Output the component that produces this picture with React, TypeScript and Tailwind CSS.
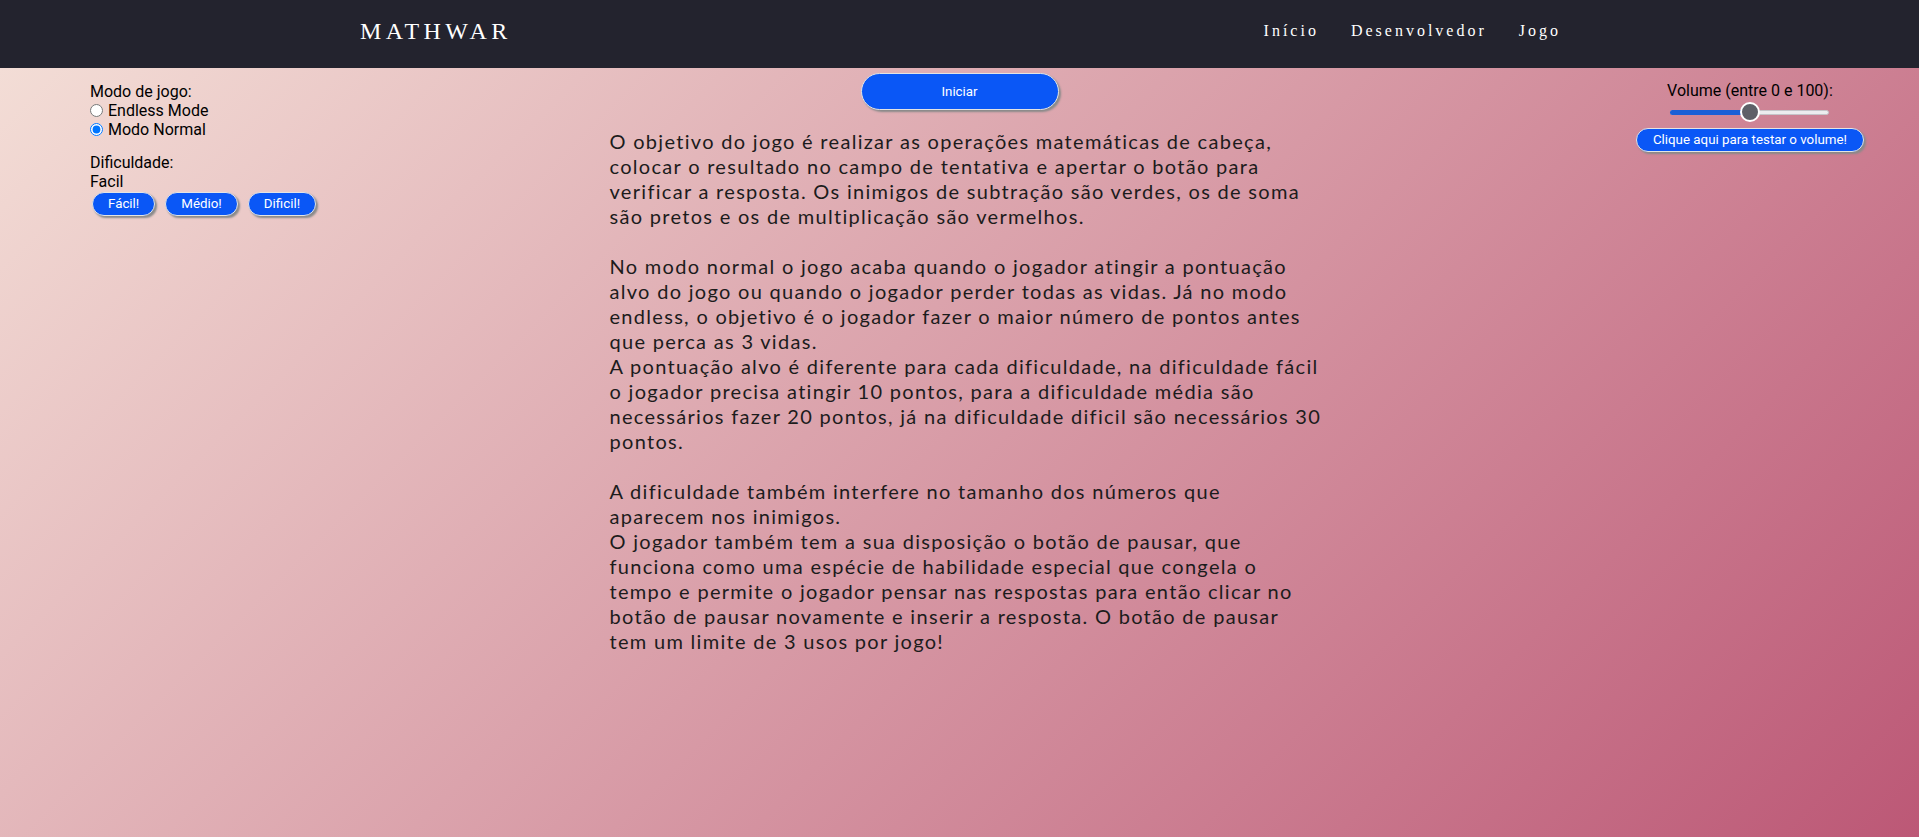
import React from "react";

const lines1 = [
  "O objetivo do jogo é realizar as operações matemáticas de cabeça,",
  "colocar o resultado no campo de tentativa e apertar o botão para",
  "verificar a resposta. Os inimigos de subtração são verdes, os de soma",
  "são pretos e os de multiplicação são vermelhos.",
];
const lines2 = [
  "No modo normal o jogo acaba quando o jogador atingir a pontuação",
  "alvo do jogo ou quando o jogador perder todas as vidas. Já no modo",
  "endless, o objetivo é o jogador fazer o maior número de pontos antes",
  "que perca as 3 vidas.",
  "A pontuação alvo é diferente para cada dificuldade, na dificuldade fácil",
  "o jogador precisa atingir 10 pontos, para a dificuldade média são",
  "necessários fazer 20 pontos, já na dificuldade dificil são necessários 30",
  "pontos.",
];
const lines3 = [
  "A dificuldade também interfere no tamanho dos números que",
  "aparecem nos inimigos.",
  "O jogador também tem a sua disposição o botão de pausar, que",
  "funciona como uma espécie de habilidade especial que congela o",
  "tempo e permite o jogador pensar nas respostas para então clicar no",
  "botão de pausar novamente e inserir a resposta. O botão de pausar",
  "tem um limite de 3 usos por jogo!",
];

function Block({ lines }: { lines: string[] }) {
  return (
    <div>
      {lines.map((l, i) => (
        <div key={i} className="whitespace-nowrap">
          {l}
        </div>
      ))}
    </div>
  );
}

const btn =
  "rounded-full bg-[#0a57f6] text-white text-[13.33px] leading-[16px] border border-[#e4e4e4] shadow-[2px_2px_2px_#8a8a8a] font-['Roboto',sans-serif]";

export default function App() {
  return (
    <div className="w-full min-h-screen flex flex-col">
      <header className="h-[68px] bg-[#23232e] flex items-center justify-between pl-[360px] pr-[358px] pb-[6px] font-['Liberation_Serif',serif] text-white">
        <div className="text-[24px] tracking-[4.3px]">MATHWAR</div>
        <nav className="flex gap-[32px] text-[16px] tracking-[3px]">
          <span>Início</span>
          <span>Desenvolvedor</span>
          <span>Jogo</span>
        </nav>
      </header>
      <main className="flex-1 h-[769px] bg-[linear-gradient(135deg,#f3ddd6,#bc5876)] grid grid-cols-[1fr_700px_1fr]">
        <div className="pl-[90px] pt-[14px] font-['Roboto',sans-serif] text-[16px] leading-[19px] text-black">
          <div>Modo de jogo:</div>
          <label className="flex items-center">
            <input type="radio" name="modo" className="m-0 mr-[5px] w-[13px] h-[13px]" />
            Endless Mode
          </label>
          <label className="flex items-center">
            <input type="radio" name="modo" defaultChecked className="m-0 mr-[5px] w-[13px] h-[13px]" />
            Modo Normal
          </label>
          <div className="mt-[14px]">Dificuldade:</div>
          <div>Facil</div>
          <div className="flex gap-[10px] ml-[2px] mt-[1px]">
            <button className={btn + " px-[15px] py-[3px]"}>Fácil!</button>
            <button className={btn + " px-[15px] py-[3px]"}>Médio!</button>
            <button className={btn + " px-[15px] py-[3px]"}>Dificil!</button>
          </div>
        </div>
        <div className="flex flex-col items-center">
          <button className={btn + " mt-[5px] w-[198px] h-[37px]"}>Iniciar</button>
          <div className="self-stretch mt-[19px] font-['Lato',sans-serif] text-[20px] tracking-[1.3px] leading-[25px] text-[#1c1c1c]">
            <Block lines={lines1} />
            <div className="h-[25px]" />
            <Block lines={lines2} />
            <div className="h-[25px]" />
            <Block lines={lines3} />
          </div>
        </div>
        <div className="flex justify-end pr-[55px]">
          <div className="flex flex-col items-center pt-[13px] font-['Roboto',sans-serif] text-[16px] leading-[19px] text-black">
            <div>Volume (entre 0 e 100):</div>
            <div className="relative w-[159px] h-[20px] mt-[2px] flex items-center">
              <div className="w-full h-[5px] rounded-full bg-[#ececee] border border-[#c4c4c8]" />
              <div className="absolute left-0 w-1/2 h-[5px] rounded-full bg-[#1a5fd6]" />
              <div className="absolute left-[calc(50%-10px)] w-[20px] h-[20px] rounded-full bg-[#5f6068] border-2 border-white" />
            </div>
            <button className={btn + " mt-[6px] px-[16px] py-[3px]"}>Clique aqui para testar o volume!</button>
          </div>
        </div>
      </main>
    </div>
  );
}
